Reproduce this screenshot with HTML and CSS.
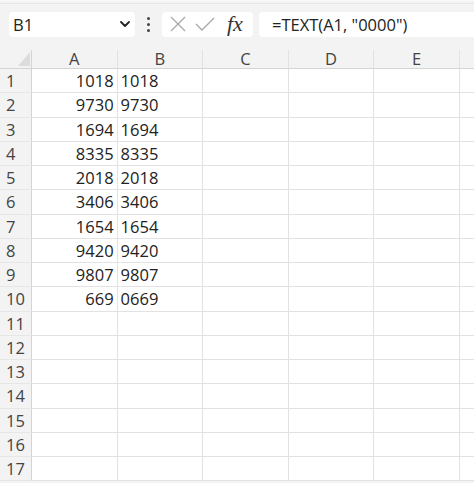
FILE: index.html
```html
<!DOCTYPE html>
<html>
<head>
<meta charset="utf-8">
<link rel="stylesheet" href="styles.css">
</head>
<body>
<div class="app">
  <div class="toolbar">
    <div class="namebox">
      <span class="name">B1</span>
      <svg class="chev" width="10" height="6" viewBox="0 0 10 6"><path d="M1 1 L5 5 L9 1" fill="none" stroke="#222" stroke-width="1.8" stroke-linecap="round" stroke-linejoin="round"/></svg>
    </div>
    <div class="dots"><i></i><i></i><i></i></div>
    <div class="fxbox">
      <svg class="ico" width="16" height="16" viewBox="0 0 16 16"><path d="M1 1 L15 15 M15 1 L1 15" stroke="#a8a8a8" stroke-width="1.3" fill="none"/></svg>
      <svg class="ico" width="20" height="14" viewBox="0 0 20 14"><path d="M1 7 L7 13 L19 1" stroke="#a8a8a8" stroke-width="1.3" fill="none"/></svg>
      <span class="fx">fx</span>
    </div>
    <div class="formula">=TEXT(A1, "0000")</div>
  </div>
  <div class="sheet">
    <div class="corner"><svg width="12" height="14" viewBox="0 0 12 14"><polygon points="12,0 12,14 0,14" fill="#dcdcdc"/></svg></div>
    <div class="colhead">A</div>
    <div class="colhead">B</div>
    <div class="colhead">C</div>
    <div class="colhead">D</div>
    <div class="colhead">E</div>
    <div class="colhead last"></div>
  </div>
  <div class="sheet body" id="body"></div>
</div>
<script src="app.js"></script>
</body>
</html>
```
FILE: app.js
```js
var a=[1018,9730,1694,8335,2018,3406,1654,9420,9807,669];
var html='';
for(var r=1;r<=17;r++){
  var va=r<=10?a[r-1]:'';
  var vb=r<=10?String(a[r-1]).padStart(4,'0'):'';
  html+='<div class="rowhead">'+r+'</div>'+
    '<div class="cell num">'+va+'</div>'+
    '<div class="cell">'+vb+'</div>'+
    '<div class="cell"></div><div class="cell"></div><div class="cell"></div><div class="cell last"></div>';
}
document.getElementById('body').innerHTML=html;
```
FILE: styles.css
```css
html, body {
  margin: 0;
  padding: 0;
  background: #f3f3f3;
  font-family: "Open Sans", "Noto Sans", sans-serif;
  overflow: hidden;
}
.app {
  width: 474px;
  height: 483px;
  overflow: hidden;
  border-top: 1px solid #fafafa;
  box-sizing: border-box;
}
.toolbar {
  display: flex;
  align-items: center;
  height: 47px;
  padding: 8px 0 14px 9px;
  box-sizing: border-box;
  border-top: 1px solid #e8e8e8;
  margin-top: 2px;
}
.namebox {
  width: 126px;
  height: 25px;
  background: #fff;
  border-radius: 4px;
  display: flex;
  align-items: center;
  justify-content: space-between;
  padding: 0 5px 0 4px;
  box-sizing: border-box;
  font-size: 16.5px;
  color: #222;
}
.chev { margin-right: 0; }
.dots {
  width: 27px;
  display: flex;
  flex-direction: column;
  align-items: center;
  gap: 3px;
}
.dots i {
  display: block;
  width: 3px;
  height: 3px;
  border-radius: 50%;
  background: #444;
}
.fxbox {
  width: 91px;
  height: 25px;
  background: #fff;
  border-radius: 4px;
  display: flex;
  align-items: center;
  padding-left: 8px;
  box-sizing: border-box;
  gap: 9px;
}
.fx {
  font-family: "Liberation Serif", "DejaVu Serif", serif;
  font-style: italic;
  font-size: 22px;
  color: #333;
  margin-left: 3px;
  line-height: 1;
}
.formula {
  margin-left: 6px;
  flex: 1;
  height: 25px;
  background: #fff;
  border-radius: 4px 0 0 4px;
  padding-left: 13px;
  font-size: 16.5px;
  line-height: 25px;
  color: #222;
  white-space: nowrap;
}
.sheet {
  display: grid;
  grid-template-columns: 32px repeat(5, 85.6px) 1fr;
  grid-auto-rows: 19px;
}
.sheet.body {
  grid-auto-rows: 24.25px;
  background: #fff;
}
.corner {
  background: #f3f3f3;
  border-right: 1px solid #d4d4d4;
  border-bottom: 1px solid #d4d4d4;
  display: flex;
  align-items: flex-end;
  justify-content: flex-end;
  padding: 0 1px 2px 0;
  box-sizing: border-box;
}
.corner svg { display: block; }
.colhead {
  background: #f3f3f3;
  border-right: 1px solid #e2e2e2;
  border-bottom: 1px solid #d4d4d4;
  box-sizing: border-box;
  text-align: center;
  font-size: 16.5px;
  line-height: 18px;
  color: #444;
}
.colhead.last, .cell.last { border-right: none; }
.rowhead {
  background: #f3f3f3;
  border-right: 1px solid #d4d4d4;
  border-bottom: 1px solid #e6e6e6;
  box-sizing: border-box;
  font-size: 16.5px;
  line-height: 23px;
  padding-left: 6px;
  color: #444;
}
.cell {
  border-right: 1px solid #e2e2e2;
  border-bottom: 1px solid #e2e2e2;
  box-sizing: border-box;
  font-size: 16.5px;
  line-height: 23px;
  padding: 0 3px;
  color: #222;
  white-space: nowrap;
}
.cell.num { text-align: right; }
```
